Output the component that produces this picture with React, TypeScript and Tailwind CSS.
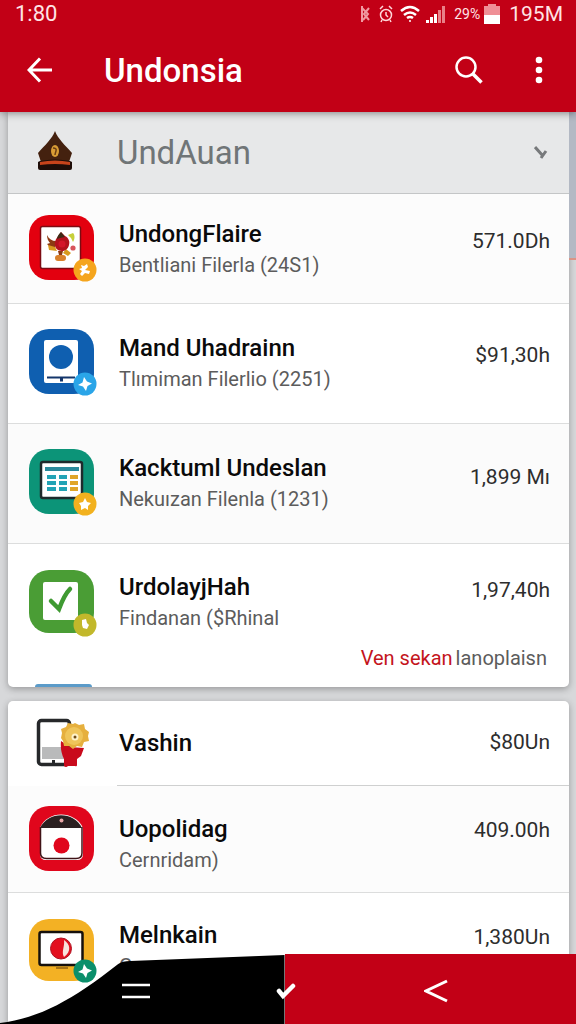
import React from 'react';

const Badge = ({ color, children }: { color: string; children?: React.ReactNode }) => (
  <g>
    <circle cx="56" cy="55" r="11.5" fill={color} />
    {children ?? <path d="M55 48l3 4.500 5 2-4.500 2.500-1.500 5-3-4.500-5-1.500 4.500-2.500z" fill="#fff" />}
  </g>
);

const Tile = ({ color, children }: { color: string; children: React.ReactNode }) => (
  <svg viewBox="0 0 68 68" className="h-[68px] w-[68px] shrink-0" aria-hidden="true">
    <rect width="65" height="65" rx="20" fill={color} />
    {children}
  </svg>
);

const GarudaIcon = () => (
  <Tile color="#e3000f">
    <rect x="11.5" y="11.5" width="40" height="42" rx="2" fill="#fff" stroke="#7d0b12" strokeWidth="1.5" />
    <path d="M18 20c2 4 5 6 9 6l-1 8c-4 0-6-3-8-5l3-1c-2-2-3-5-3-8z" fill="#8c3a12" />
    <path d="M19 30l7 2 2 4-8-1zM37 34l5 4-3 3-5-3z" fill="#d89a1e" />
    <path d="M32 17l4 4c4 2 5 6 4 9-1 4-4 6-7 6-5 0-8-4-7-9 1-4 3-5 4-7z" fill="#b3121d" />
    <path d="M32 17l4 5-5 1-3 1c0-3 2-5 4-7z" fill="#3f2a16" />
    <circle cx="33" cy="29" r="3.5" fill="#d4152a" />
    <path d="M39 20l5-2c2 2 2 6 0 9l-2-4z" fill="#c7cf3a" />
    <circle cx="44" cy="33" r="2.6" fill="#d8545c" />
    <path d="M29 36h5l-1 4h-3z" fill="#8c3a12" />
    <rect x="26" y="40" width="11" height="6" rx="3" fill="#d9812b" />
    <Badge color="#f5a51d">
      <path d="M52 50l3 1 3-2 1 3-3 3 5 1-1 3-4-1-3 3-2-2 2-3-3-2 3-1z" fill="#fff" />
    </Badge>
  </Tile>
);

const TabletIcon = () => (
  <Tile color="#0f5fb0">
    <rect x="15" y="11" width="34" height="43" rx="2" fill="#fff" />
    <circle cx="32" cy="28" r="12" fill="#0f5fb0" />
    <path d="M18 47.5h28v2H34v3h-3v-3H18z" fill="#14366b" />
    <Badge color="#2aa5e8" />
  </Tile>
);

const SheetIcon = () => (
  <Tile color="#0c9478">
    <rect x="12" y="13" width="41" height="36" rx="2" fill="#fff" stroke="#1e2a2c" strokeWidth="2.5" />
    <rect x="16" y="18" width="34" height="4" fill="#2a8a9c" />
    <path d="M18 26h9v4h-9zM30 26h8v4h-8zM18 32h9v4h-9zM30 32h8v4h-8zM18 38h9v4h-9zM30 38h8v4h-8z" fill="#22a3b5" />
    <path d="M41 26h8v4h-8zM41 32h8v4h-8zM41 38h8v4h-8z" fill="#e0a528" />
    <Badge color="#f2b11e">
      <path d="M56 49l2 4 4 1-3 3v4l-3-2-4 2v-4l-2-3 4-1z" fill="#fff" />
    </Badge>
  </Tile>
);

const CheckIcon = () => (
  <svg viewBox="0 0 68 68" className="h-[68px] w-[68px] shrink-0" aria-hidden="true">
    <rect width="65" height="63" rx="20" fill="#4a9d35" />
    <rect x="14" y="12" width="35" height="38" rx="2" fill="#fff" />
    <path d="M22 31l8 8c3-8 6-15 11-20" fill="none" stroke="#3f9a32" strokeWidth="4.5" strokeLinecap="round" />
    <Badge color="#c2b82b">
      <path d="M53 50l4-1 1 4 2 2-2 4-4-1-1-3z" fill="#fff" />
    </Badge>
  </svg>
);

const LetterIcon = () => (
  <Tile color="#e0061c">
    <path d="M11 22C18 4 46 4 54 22v26q0 6-6 6H17q-6 0-6-6z" fill="#fff" />
    <path d="M11 22C19 5 45 5 53 22z" fill="#2b2021" />
    <path d="M11.500 21v26q0 5.500 6 5.500h29.500q6 0 6-5.500V21" fill="none" stroke="#401317" strokeWidth="1.500" />
    <circle cx="32.500" cy="14.500" r="2" fill="#e9a7a8" />
    <circle cx="32.500" cy="39.500" r="8" fill="#e0061c" />
  </Tile>
);

const ScreenIcon = () => (
  <svg viewBox="0 0 68 68" className="h-[68px] w-[68px] shrink-0" aria-hidden="true">
    <rect width="65" height="62" rx="20" fill="#f3b124" />
    <rect x="10.500" y="13" width="43" height="33" rx="2" fill="#fff" stroke="#15100c" strokeWidth="2.500" />
    <path d="M27 49h12" stroke="#a87415" strokeWidth="2" />
    <circle cx="32" cy="29.500" r="10.500" fill="#e3101f" stroke="#ad1220" />
    <path d="M35 21c6 4 8 11 0 17-3-5 1-11 0-17z" fill="#f8e3dd" />
    <g transform="translate(0 -3)">
      <Badge color="#0b8f6b" />
    </g>
  </svg>
);

const PhoneIcon = () => (
  <svg viewBox="0 0 68 50" className="h-[50px] w-[68px] shrink-0" aria-hidden="true">
    <rect x="9.500" y="2.500" width="31" height="44" rx="3" fill="#fff" stroke="#26282a" strokeWidth="3.500" />
    <path d="M13 29h26v12H13z" fill="#b9babb" />
    <path d="M23 42h3v3h-3z" fill="#26282a" />
    <path d="M32 23q-1 10 3 18v7q2 2 4 0h7q2 1 2-1v-6l4-3 3-8-14-1z" fill="#c90a1c" />
    <path
      d="M46 5l4 2 5-1 1 5 4 3-1 4 1 5-5 1-2 5-5-1-4 3-4-3-5 0-1-5-2-3 1-5-1-4 5-2 2-4 5 1z"
      fill="#e6b03e"
    />
    <circle cx="45" cy="18" r="9" fill="#efc55a" />
    <circle cx="46" cy="19" r="3.500" fill="#fff3c9" />
    <circle cx="46" cy="19" r="1.500" fill="#6e4b16" />
  </svg>
);

const HatIcon = () => (
  <svg viewBox="0 0 36 40" className="mb-1 h-10 w-9" aria-hidden="true">
    <path d="M18 0c3 8 10 14 17 22l-3 9H4L1 22C8 14 15 8 18 0z" fill="#44210f" />
    <path d="M3 30q15-3 30 0l2 1v6q0 2-2 2H3q-2 0-2-2v-6z" fill="#1e0d08" />
    <path d="M3 31q15-3 30 0v3q-15-2-30 0z" fill="#c6431b" />
    <ellipse cx="18" cy="20" rx="4" ry="6" fill="#d99c35" />
    <path d="M16 17q4 0 3 3t-1 4" fill="none" stroke="#6b3d13" strokeWidth="1.500" />
  </svg>
);

type Item = {
  icon: React.ReactNode;
  title: string;
  subtitle?: string;
  price: string;
  row: string;
  textClass: string;
  priceClass: string;
};

const files: Item[] = [
  {
    icon: <GarudaIcon />,
    title: 'UndongFlaire',
    subtitle: 'Bentliani Filerla (24S1)',
    price: '571.0Dh',
    row: 'h-[110px] border-b pt-[21px] bg-[#fcfcfc]',
    textClass: 'pt-[3px]',
    priceClass: 'leading-[52px]',
  },
  {
    icon: <TabletIcon />,
    title: 'Mand Uhadrainn',
    subtitle: 'Tlımiman Filerlio (2251)',
    price: '$91,30h',
    row: 'h-[120px] border-b pt-[25px] bg-white',
    textClass: 'pt-[3px]',
    priceClass: 'leading-[52px]',
  },
  {
    icon: <SheetIcon />,
    title: 'Kacktuml Undeslan',
    subtitle: 'Nekuızan Filenla (1231)',
    price: '1,899 Mı',
    row: 'h-[120px] border-b pt-[25px] bg-[#fbfbfb]',
    textClass: 'pt-[3px]',
    priceClass: 'leading-[56px]',
  },
  {
    icon: <CheckIcon />,
    title: 'UrdolayjHah',
    subtitle: 'Findanan ($Rhinal',
    price: '1,97,40h',
    row: 'h-[100px] pt-[26px] bg-white',
    textClass: 'pt-px',
    priceClass: 'leading-[40px]',
  },
];

const more: Item[] = [
  {
    icon: <LetterIcon />,
    title: 'Uopolidag',
    subtitle: 'Cernridam)',
    price: '409.00h',
    row: 'h-[107px] border-b pt-[20px] bg-[#fcfcfc]',
    textClass: 'pt-[7px]',
    priceClass: 'leading-[49px]',
  },
  {
    icon: <ScreenIcon />,
    title: 'Melnkain',
    subtitle: 'Guruman Filalabal',
    price: '1,380Un',
    row: 'h-[131px] pt-[26px] bg-white',
    textClass: 'pt-0',
    priceClass: 'leading-[37px]',
  },
];

const Row = ({ item }: { item: Item }) => (
  <li className={`flex items-start border-[#dcdddd] pl-[21px] pr-[19px] ${item.row}`}>
    {item.icon}
    <div className={`ml-[22px] min-w-0 flex-1 whitespace-nowrap ${item.textClass}`}>
      <h3 className="text-[24px] font-medium leading-[32px] text-[#0a0a0a]">{item.title}</h3>
      {item.subtitle && <p className="text-[20px] leading-[31px] text-[#5c5c5c]">{item.subtitle}</p>}
    </div>
    <span className={`text-[21px] text-[#2d2d2d] ${item.priceClass}`}>{item.price}</span>
  </li>
);

const StatusBar = () => (
  <div className="flex h-7 items-center pl-[15px] pr-[13px] text-[22px] leading-7 text-[#ffe3e5]">
    <span className="flex-1">1:80</span>
    <div className="flex items-center">
      <svg viewBox="0 0 10 18" className="mr-[9px] h-[18px] w-[10px]" fill="none" stroke="#f09aa2" strokeWidth="2" aria-hidden="true">
        <path d="M2 1v16M2 3l6 6-5 6M9 3L4 9l5 6" />
      </svg>
      <svg viewBox="0 0 14 18" className="mr-[7px] h-[18px] w-[14px]" fill="none" stroke="#ffd6d9" strokeWidth="1.500" aria-hidden="true">
        <circle cx="7" cy="10" r="5.500" />
        <path d="M7 7v3l2 2M1 4l3-3M13 4l-3-3M3 15l-1 2M11 15l1 2" />
      </svg>
      <svg viewBox="0 0 20 18" className="mr-[6px] h-[18px] w-5" fill="none" stroke="#fff" strokeWidth="2.500" aria-hidden="true">
        <path d="M1 6q9-8 18 0M4 10q6-5 12 0M7 13q3-2 6 0" />
        <circle cx="10" cy="16" r="1" fill="#fff" stroke="none" />
      </svg>
      <svg viewBox="0 0 20 18" className="mr-[8px] h-[18px] w-5" aria-hidden="true">
        <path d="M0 15h3v3H0zM4 12h3v6H4zM8 9h3v9H8z" fill="#fff" />
        <path d="M12 5h3v13h-3zM16 1h3v17h-3z" fill="#e98088" />
      </svg>
      <span className="mr-[4px] text-[14px]">29%</span>
      <svg viewBox="0 0 16 20" className="mr-[9px] h-5 w-4" aria-hidden="true">
        <path d="M4 0h8v2h4v18H0V2h4z" fill="#ef8f96" />
        <path d="M0 11h16v9H0z" fill="#fff" />
      </svg>
      <span className="text-[21px]">195M</span>
    </div>
  </div>
);

const App = () => {
  return (
    <div className="flex min-h-screen flex-col bg-[#d7d8da] font-[Roboto,sans-serif]">
      <header className="relative z-10 bg-[#c20016] shadow-[0_1px_8px_rgba(0,0,0,0.45)]">
        <StatusBar />
        <div className="flex h-[84px] items-center pl-[20px] pr-[17px]">
          <button type="button" aria-label="Back" className="flex h-10 w-10 items-center justify-center">
            <svg viewBox="0 0 26 26" className="h-[26px] w-[26px]" fill="none" stroke="#fff" strokeWidth="3">
              <path d="M13 1.500L2 13l11 11.500M2 13h23" />
            </svg>
          </button>
          <h1 className="ml-[44px] flex-1 pt-[2px] text-[33px] font-medium leading-10 text-white">Undonsia</h1>
          <button type="button" aria-label="Search" className="flex h-10 w-10 items-center justify-center">
            <svg viewBox="0 0 28 28" className="h-7 w-7" fill="none" stroke="#fff" strokeWidth="2.500">
              <circle cx="11" cy="11" r="9.500" />
              <path d="M17.500 17.500l9 9" strokeWidth="3.500" />
            </svg>
          </button>
          <button type="button" aria-label="More options" className="ml-[30px] flex h-10 w-10 items-center justify-center">
            <svg viewBox="0 0 8 28" className="h-7 w-2" fill="#fff">
              <circle cx="4" cy="4" r="3.300" />
              <circle cx="4" cy="14" r="3.300" />
              <circle cx="4" cy="24" r="3.300" />
            </svg>
          </button>
        </div>
      </header>

      <div className="flex flex-1">
        <main className="flex min-w-0 flex-1 flex-col gap-[14px] pl-2">
          <section className="overflow-hidden rounded-b-[5px] bg-white shadow-[0_2px_7px_rgba(0,0,0,0.3)]">
            <button
              type="button"
              className="flex h-[82px] w-full items-center border-b border-[#c4c6c7] bg-[#e7e8e9] pl-[29px] pr-[21px] text-left"
            >
              <HatIcon />
              <span className="ml-[44px] flex-1 text-[33px] leading-10 text-[#707577]">UndAuan</span>
              <svg viewBox="0 0 14 14" className="h-[14px] w-[14px]" fill="none" stroke="#77797b" strokeWidth="3" aria-hidden="true">
                <path d="M1 1l8 9M12 5l-5 7" />
              </svg>
            </button>
            <ul>
              {files.map((item) => (
                <Row key={item.title} item={item} />
              ))}
            </ul>
            <div className="flex h-[40px] items-start justify-end pr-[22px] text-[20px] leading-7 text-[#5c5c5c]">
              <a href="#all" className="text-[#c4141c]">Ven sekan</a>
              <span className="ml-[3px]">lanoplaisn</span>
            </div>
            <div className="ml-[27px] h-[3px] w-[57px] rounded-t-full bg-[#5b9bc9]" />
          </section>

          <section className="flex-1 overflow-hidden rounded-t-[5px] bg-white shadow-[0_2px_7px_rgba(0,0,0,0.3)]">
            <div className="flex h-[84px] items-center pl-[21px] pr-[19px]">
              <PhoneIcon />
              <h3 className="ml-[22px] flex-1 text-[24px] font-medium leading-[32px] text-[#0a0a0a]">Vashin</h3>
              <span className="text-[21px] text-[#2d2d2d]">$80Un</span>
            </div>
            <div className="ml-[109px] h-px bg-[#cfd0d0]" />
            <ul>
              {more.map((item) => (
                <Row key={item.title} item={item} />
              ))}
            </ul>
          </section>
        </main>
        <div className="w-[7px] shrink-0">
          <div className="h-[148px] border-b-2 border-[#d99486] bg-[#b3b9c4]" />
        </div>
      </div>

      <nav className="fixed inset-x-0 bottom-0 z-20 grid h-[70px] grid-cols-[repeat(3,26.300%)] content-center justify-center justify-items-center pr-1 pt-1">
        <div className="absolute inset-0 -z-10 flex">
          <svg viewBox="0 0 284 70" preserveAspectRatio="none" className="h-full w-[49.400%]" aria-hidden="true">
            <path d="M0 69C40 64 72 46 118 10Q122 7 130 7L284 1v69H0z" fill="#000" />
          </svg>
          <div className="flex-1 bg-[#c20016]" />
        </div>
        <button type="button" aria-label="Menu" className="flex h-12 w-12 items-center justify-center">
          <svg viewBox="0 0 28 16" className="h-4 w-7" stroke="#fff" strokeWidth="2.500">
            <path d="M0 2h28M0 14h28" />
          </svg>
        </button>
        <button type="button" aria-label="Done" className="flex h-12 w-12 items-center justify-center">
          <svg viewBox="0 0 20 18" className="h-[18px] w-5" fill="none" stroke="#fff" strokeWidth="4.500" strokeLinecap="round">
            <path d="M3 9l4 5L17 4" />
          </svg>
        </button>
        <button type="button" aria-label="Previous" className="flex h-12 w-12 items-center justify-center">
          <svg viewBox="0 0 24 24" className="h-6 w-6" fill="none" stroke="#fff" strokeWidth="3">
            <path d="M23 2L2 12l21 10" />
          </svg>
        </button>
      </nav>
    </div>
  );
};

export default App;
